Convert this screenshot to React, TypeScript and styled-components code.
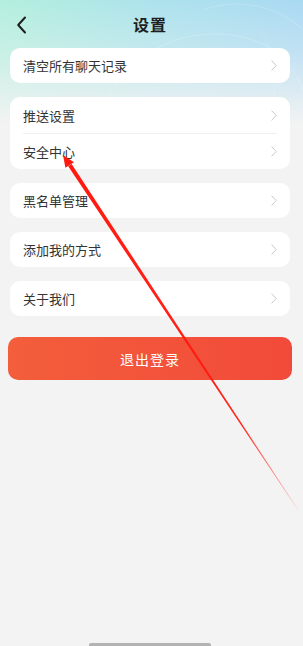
import styled, { createGlobalStyle } from "styled-components";

const GlobalStyle = createGlobalStyle`
  html, body {
    margin: 0;
    padding: 0;
    background: #f3f3f3;
  }
  body {
    font-family: "Noto Sans CJK SC", "Noto Sans", sans-serif;
  }
  * { box-sizing: border-box; }
`

const Page = styled.div`
  position: relative;
  width: 303px;
  height: 646px;
  overflow: hidden;
  display: flex;
  flex-direction: column;
  padding: 0 13px 0 10px;
  background:
    linear-gradient(180deg, rgba(243,243,243,0) 0px, rgba(243,243,243,0.35) 55px, #f3f3f3 125px) no-repeat,
    linear-gradient(90deg, #b3efdd 0%, #ade3ec 50%, #a9d9f3 100%) no-repeat;
  background-size: 100% 130px, 100% 130px;
  background-color: #f3f3f3;
`
const Swirl = styled.svg`
  position: absolute;
  top: 0;
  right: 0;
  pointer-events: none;
`
const Header = styled.div`
  position: relative;
  height: 48px;
  display: flex;
  align-items: center;
  justify-content: center;
`
const Back = styled.svg`
  position: absolute;
  left: 6px;
  top: 16px;
`
const Title = styled.div`
  font-size: 16px;
  font-weight: 700;
  color: #1e1e1e;
  letter-spacing: 1px;
`
const List = styled.div`
  position: relative;
  display: flex;
  flex-direction: column;
  gap: 14px;
`
const Card = styled.div`
  background: #fff;
  border-radius: 10px;
  padding: 0 13px;
`
const Row = styled.div<{ $h?: number }>`
  height: ${p => p.$h ?? 35}px;
  display: flex;
  align-items: center;
  justify-content: space-between;
  font-size: 13px;
  color: #333;
  & + & {
    border-top: 1px solid #efefef;
  }
`
const Chevron = styled.svg`
  flex: none;
`
const Logout = styled.button`
  position: relative;
  margin: 21px -2px 0;
  height: 43px;
  border: none;
  border-radius: 10px;
  background: linear-gradient(90deg, #f35e3b 0%, #f24a3a 100%);
  color: #fff;
  font-family: inherit;
  font-size: 14px;
  letter-spacing: 1px;
`
const HomeBar = styled.div`
  margin: auto auto 0;
  width: 122px;
  height: 3px;
  border-radius: 2px 2px 0 0;
  background: #b3b3b3;
`
const Annotation = styled.svg`
  position: absolute;
  left: 0;
  top: 0;
  pointer-events: none;
`

const items = [["清空所有聊天记录"], ["推送设置", "安全中心"], ["黑名单管理"], ["添加我的方式"], ["关于我们"]];

function Arrow() {
  return (
    <Chevron width="6" height="11" viewBox="0 0 6 11">
      <path d="M0.6 0.6 L5.2 5.5 L0.6 10.4" fill="none" stroke="#c9c9c9" strokeWidth="1" />
    </Chevron>
  )
}

export default function App() {
  return (
    <>
      <GlobalStyle />
      <Page>
        <Swirl width="220" height="110" viewBox="0 0 220 110">
          <path d="M20 110 C40 50 110 20 170 40 C200 50 215 75 220 90" fill="none" stroke="rgba(255,255,255,0.18)" strokeWidth="1.2" />
          <path d="M50 110 C70 70 120 50 160 62" fill="none" stroke="rgba(255,255,255,0.12)" strokeWidth="1" />
          <path d="M120 10 C160 -5 200 10 220 30" fill="none" stroke="rgba(255,255,255,0.15)" strokeWidth="1.2" />
          <path d="M175 30 C190 45 195 75 190 110" fill="none" stroke="rgba(255,255,255,0.12)" strokeWidth="1" />
        </Swirl>
        <Header>
          <Back width="12" height="18" viewBox="0 0 12 18">
            <path d="M9 1.5 L2.2 9 L9 16.5" fill="none" stroke="#1e1e1e" strokeWidth="2" strokeLinecap="round" strokeLinejoin="round" />
          </Back>
          <Title>设置</Title>
        </Header>
        <List>
          {items.map((group, i) => (
            <Card key={i}>
              {group.map(label => (
                <Row key={label} $h={group.length > 1 ? 36 : 35}>
                  <span>{label}</span>
                  <Arrow />
                </Row>
              ))}
            </Card>
          ))}
        </List>
        <Logout>退出登录</Logout>
        <HomeBar />
        <Annotation width="303" height="646" viewBox="0 0 303 646">
          <defs>
            <linearGradient id="fade" x1="70" y1="165" x2="298" y2="510" gradientUnits="userSpaceOnUse">
              <stop offset="0" stopColor="#ff1a0f" stopOpacity="1" />
              <stop offset="0.75" stopColor="#ff1a0f" stopOpacity="0.95" />
              <stop offset="1" stopColor="#ff1a0f" stopOpacity="0.1" />
            </linearGradient>
          </defs>
          <polygon points="71.6,163.9 68.2,166.2 297.8,510.2 298.3,509.8" fill="url(#fade)" />
          <polygon points="63,155 74,162.2 65.4,167.8" fill="#ff1a0f" />
        </Annotation>
      </Page>
    </>
  )
}
